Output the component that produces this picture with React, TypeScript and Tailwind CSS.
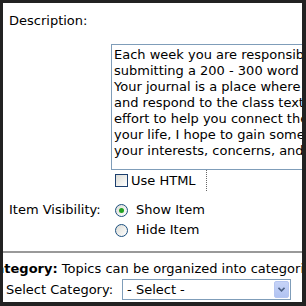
import React from "react";

const font = { fontFamily: '"DejaVu Sans", Verdana, sans-serif' };

function Checkbox() {
  return (
    <span className="inline-block w-[13px] h-[13px] border border-[#1c3f6e] bg-gradient-to-br from-[#dcdcd6] to-[#ffffff] shrink-0" />
  );
}

function Radio({ checked }: { checked?: boolean }) {
  return (
    <span className="inline-flex items-center justify-center w-[13px] h-[13px] rounded-full border border-[#1c5180] bg-gradient-to-br from-[#dcdcd6] to-[#ffffff] shrink-0">
      {checked && <span className="block w-[5px] h-[5px] rounded-full bg-[#21a121]" />}
    </span>
  );
}

export default function App() {
  const lines = [
    "Each week you are responsible for",
    "submitting a 200 - 300 word journal entry.",
    "Your journal is a place where you can",
    "and respond to the class texts. In an",
    "effort to help you connect the readings to",
    "your life, I hope to gain some insight into",
    "your interests, concerns, and ideas.",
  ];
  return (
    <div className="w-[306px] h-[306px] bg-[#222222] pt-[3px] pl-[3px] pr-[4px] pb-[4px]" style={font}>
      <div className="w-full h-full bg-white overflow-hidden flex flex-col text-[13px] leading-[16px] text-black">
        <div className="pt-[10px] pl-[6px]">Description:</div>
        <div className="mt-[15px] ml-[108px] w-[260px] h-[126px] border border-[#7f9db9] pt-[2px] pl-[2px] overflow-hidden shrink-0">
          {lines.map((l, i) => (
            <div key={i} className="whitespace-nowrap">{l}</div>
          ))}
        </div>
        <div className="flex ml-[104px] h-[21px]">
          <div className="flex items-center gap-[3px] pl-[8px] pr-[10px] border-r border-dotted border-[#666]">
            <Checkbox />
            <span>Use HTML</span>
          </div>
        </div>
        <div className="flex mt-[11px]">
          <div className="w-[108px] pl-[6px]">Item Visibility:</div>
          <div className="flex flex-col gap-[4px] pl-[4px]">
            <div className="flex items-center gap-[8px] h-[16px]">
              <Radio checked />
              <span>Show Item</span>
            </div>
            <div className="flex items-center gap-[8px] h-[16px]">
              <Radio />
              <span>Hide Item</span>
            </div>
          </div>
        </div>
        <div className="mt-[13px] h-[2px] bg-[#999999] shrink-0" />
        <div className="mt-[8px] whitespace-nowrap ml-[-17px]">
          <b>Category:</b> Topics can be organized into categories.
        </div>
        <div className="flex items-center mt-[2px] pl-[3px]">
          <span className="whitespace-nowrap">Select Category:</span>
          <div className="ml-[9px] w-[169px] h-[21px] border border-[#7f9db9] flex items-center justify-between pl-[4px] pr-[1px]">
            <span className="whitespace-pre">- Select -</span>
            <span className="w-[15px] h-[17px] bg-gradient-to-b from-[#c6d3f7] to-[#b1c3f2] border border-[#b6c6f1] rounded-[2px] flex items-center justify-center">
              <svg width="7" height="5" viewBox="0 0 7 5">
                <path d="M0.5 0.8 L3.5 3.8 L6.5 0.8" fill="none" stroke="#4d6185" strokeWidth="1.6" />
              </svg>
            </span>
          </div>
        </div>
      </div>
    </div>
  );
}
